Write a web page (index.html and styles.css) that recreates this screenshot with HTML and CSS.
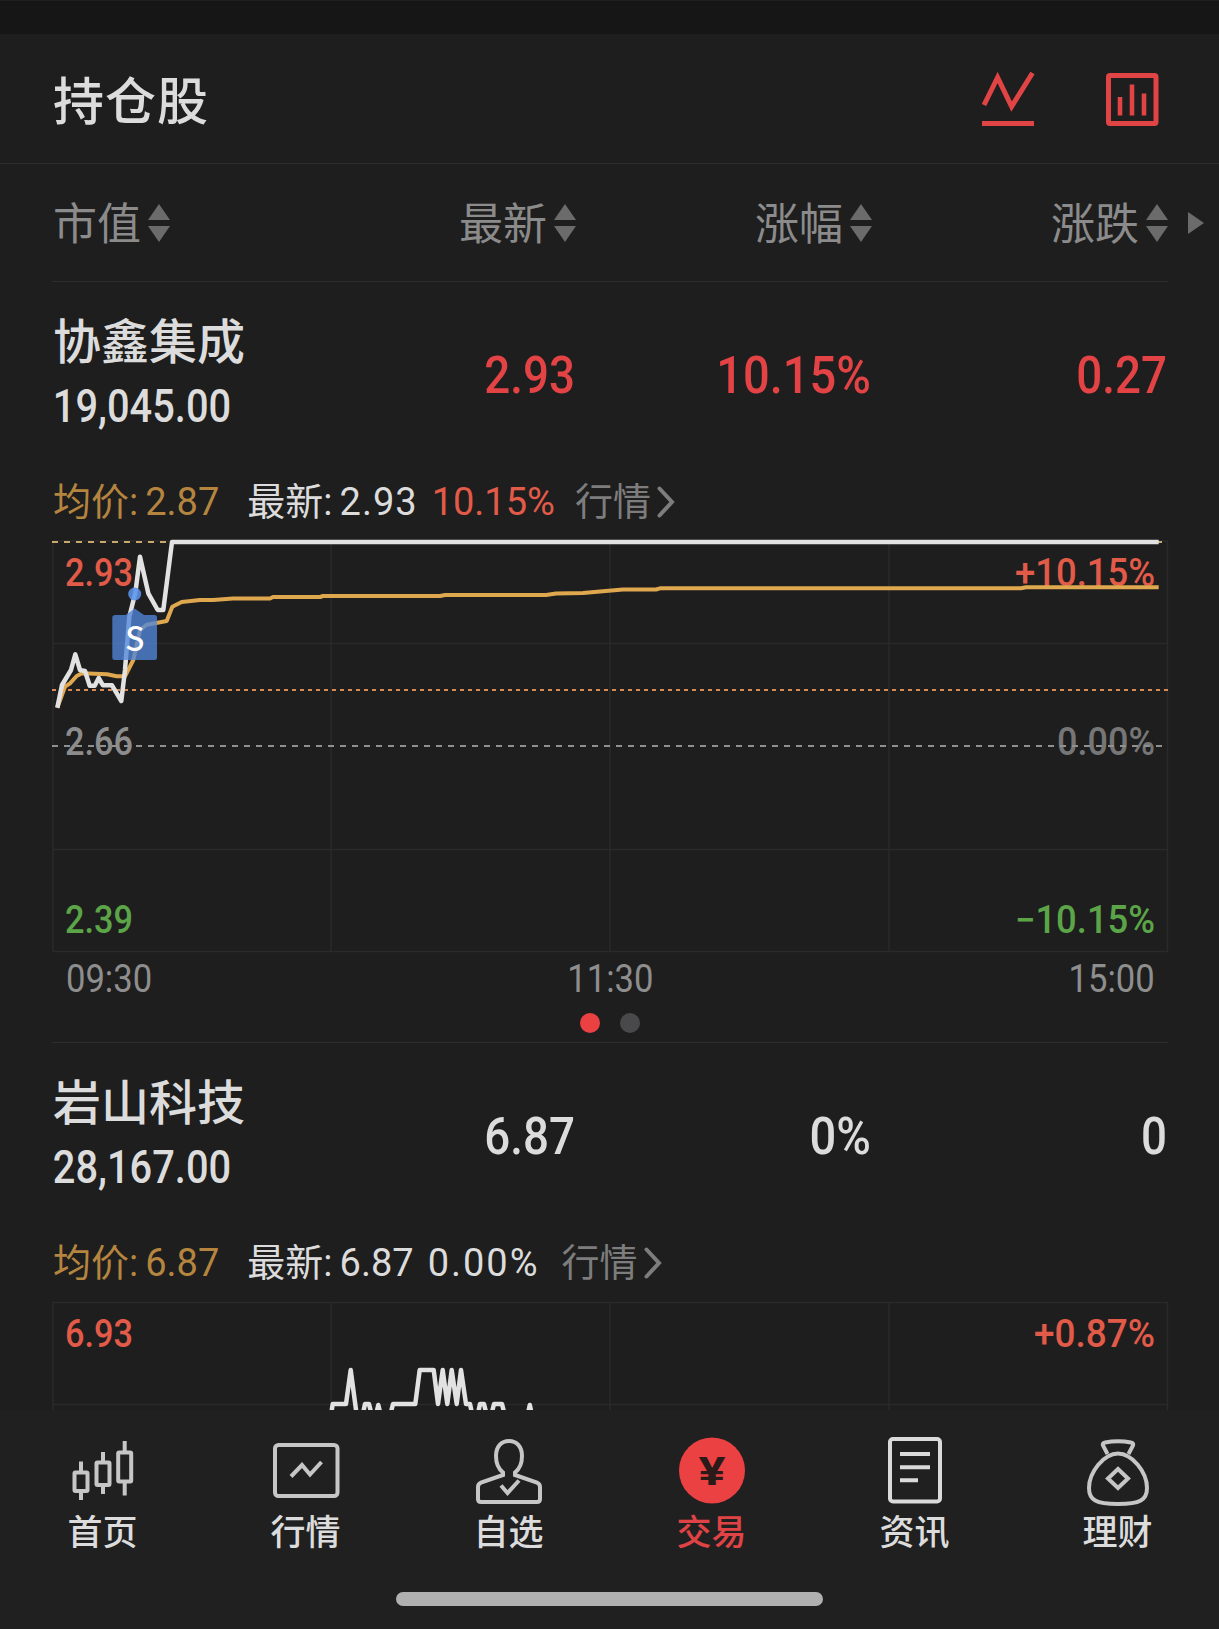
FILE: index.html
```html
<!DOCTYPE html>
<html lang="zh-CN">
<head>
    <meta charset="UTF-8">
    <meta name="viewport" content="width=device-width, initial-scale=1.0">
    <title>持仓股</title>
    <link rel="stylesheet" href="styles.css">
</head>
<body>
    <div class="strip"></div>
    <header class="header">
        <h1>持仓股</h1>
        <div class="headerIcons">
            <svg class="headerIcon" viewBox="0 0 54 56" fill="none" stroke="#e04445" stroke-width="5">
                <path d="M3 33L16.6 5.500L30.6 34.500L51.5 1"/>
                <path d="M1 51.500H53" stroke-width="5"/>
            </svg>
            <svg class="headerIcon" viewBox="0 0 54 56" fill="none" stroke="#e04445" stroke-width="5">
                <rect x="3.5" y="3.5" width="47.5" height="48" rx="1.5"/>
                <path d="M15 25V43.500M27 12.500V43.500M39 21.500V43.500" stroke-width="4.600"/>
            </svg>
        </div>
    </header>

    <div class="columns">
        <div class="column">市值<svg class="sort" viewBox="0 0 22 38"><path d="M11 0L22 16H0ZM0 22H22L11 38Z"/></svg></div>
        <div class="column">最新<svg class="sort" viewBox="0 0 22 38"><path d="M11 0L22 16H0ZM0 22H22L11 38Z"/></svg></div>
        <div class="column">涨幅<svg class="sort" viewBox="0 0 22 38"><path d="M11 0L22 16H0ZM0 22H22L11 38Z"/></svg></div>
        <div class="column">涨跌<svg class="sort" viewBox="0 0 22 38"><path d="M11 0L22 16H0ZM0 22H22L11 38Z"/></svg></div>
        <svg class="more" viewBox="0 0 16 22"><path d="M0 0L16 11L0 22Z"/></svg>
    </div>

    <main class="list">
        <section class="holding">
            <div class="quote">
                <div class="stock">
                    <div class="name">协鑫集成</div>
                    <div class="amount">19,045.00</div>
                </div>
                <div class="value red">2.93</div>
                <div class="value rate red">10.15%</div>
                <div class="value red">0.27</div>
            </div>
            <div class="info">
                <span class="average">均价:<b>2.87</b></span>
                <span class="latest wide">最新:<b>2.93</b></span>
                <span class="percent up">10.15%</span>
                <span class="link">行情</span>
                <svg class="chevron" viewBox="0 0 18 32"><path d="M2.500 2.500L15 16L2.500 29.500"/></svg>
            </div>
            <svg class="chart" viewBox="52 540 1117 412">
                <path class="grid" d="M53 541H1167.500V951.500H53ZM331 541V951M610 541V951M889 541V951M53 643.500H1167M53 849.500H1167"/>
                <text class="label up" x="65" y="586" textLength="68" lengthAdjust="spacingAndGlyphs">2.93</text>
                <text class="label up" x="1015" y="586" textLength="140" lengthAdjust="spacingAndGlyphs">+10.15%</text>
                <text class="label flat" x="65" y="755" textLength="68" lengthAdjust="spacingAndGlyphs">2.66</text>
                <text class="label flat dim" x="1057" y="755" textLength="98" lengthAdjust="spacingAndGlyphs">0.00%</text>
                <text class="label down" x="65" y="933" textLength="68" lengthAdjust="spacingAndGlyphs">2.39</text>
                <text class="label down" x="1015" y="933" textLength="140" lengthAdjust="spacingAndGlyphs">−10.15%</text>
                <path d="M52 542H1162" stroke="#c9a86c" stroke-width="2" stroke-dasharray="6 6"/>
                <path d="M52 690H1168" stroke="#d58a55" stroke-width="2" stroke-dasharray="4 4"/>
                <path d="M52 746H1162" stroke="#909090" stroke-width="2" stroke-dasharray="6 6"/>
                <path class="line gold" d="M57.300 707.700L65 686.700L70 683.300L76.700 676L82 673.300L107 674.300L116.700 676.300H125L133.300 660L140 630L146.700 624.700L166.700 621L172.300 606.700L181.700 602L200 600H213L233 598.500H270L273 597H320L323 596H440L445 595H546L556 593.500L583 593L623 589.500H656L660 588.300H1021L1026 587.300H1158.700"/>
                <path class="line" d="M57.300 707.700L62 685L71 670L75.300 654.300L80 670L85 671L89.700 685.700H94.700L98.700 678L103 685.300H112L121.300 701L125 670L129.300 616.700L135.300 593L140 556.700L148.300 593.300L157.700 610H163.300L172 542H1158.700"/>
                <circle cx="134.700" cy="594" r="6.500" fill="#5a93ec" fill-opacity=".88"/>
                <path d="M115 615H125.500L134.700 608.500L144 615H154.500Q157 615 157 617.500V657.500Q157 660 154.500 660H115Q112.300 660 112.300 657.500V617.500Q112.300 615 115 615Z" fill="#5187da" fill-opacity=".78"/>
                <text class="sell" x="135" y="650.500">S</text>
            </svg>
            <div class="times">
                <span>09:30</span>
                <span>11:30</span>
                <span>15:00</span>
            </div>
            <div class="dots">
                <i class="dot active"></i>
                <i class="dot"></i>
            </div>
        </section>

        <section class="holding">
            <div class="quote">
                <div class="stock">
                    <div class="name">岩山科技</div>
                    <div class="amount">28,167.00</div>
                </div>
                <div class="value">6.87</div>
                <div class="value rate">0%</div>
                <div class="value">0</div>
            </div>
            <div class="info">
                <span class="average">均价:<b>6.87</b></span>
                <span class="latest">最新:<b>6.87</b></span>
                <span class="percent">0.00%</span>
                <span class="link">行情</span>
                <svg class="chevron" viewBox="0 0 18 32"><path d="M2.500 2.500L15 16L2.500 29.500"/></svg>
            </div>
            <svg class="chart" viewBox="52 1301 1117 412">
                <path class="grid" d="M53 1302.500H1167.500V1712H53ZM331 1302.500V1712M610 1302.500V1712M889 1302.500V1712M53 1404.500H1167"/>
                <text class="label up" x="65" y="1347" textLength="68" lengthAdjust="spacingAndGlyphs">6.93</text>
                <text class="label up" x="1034" y="1347" textLength="121" lengthAdjust="spacingAndGlyphs">+0.87%</text>
                <path class="line" d="M331.500 1412L332.700 1404H346L350.700 1370L356.300 1412M363.300 1412L365 1404H369L371 1412M376.700 1412L378.300 1405L380 1412M391 1412L393 1404H415.300L419.700 1370H433.700L438 1404L442.700 1370L447.300 1404L451.700 1370L456.700 1404L461 1370L466 1404H470L471.700 1412M478.300 1412L480 1404H484L486 1412M492 1412L494 1404H502L504 1412M528.300 1412L529.800 1405L531.300 1412"/>
            </svg>
        </section>
    </main>

    <nav class="nav">
        <div class="tabs">
            <div class="tab">
                <svg class="icon" viewBox="0 0 72 72">
                    <path d="M14 25.500V36M14 56V64M36 16V26M36 50V58M57.700 5V16M57.700 46V59.500"/>
                    <rect x="7.500" y="36.500" width="13" height="18.500" rx="1"/>
                    <rect x="29.500" y="26.500" width="13" height="22.500" rx="1"/>
                    <rect x="51.200" y="16.500" width="13" height="29" rx="1"/>
                </svg>
                <span>首页</span>
            </div>
            <div class="tab">
                <svg class="icon" viewBox="0 0 72 72">
                    <rect x="5" y="9" width="62.500" height="51" rx="3.500"/>
                    <path d="M21 40.500L32 29L40 38.500L51.500 26"/>
                </svg>
                <span>行情</span>
            </div>
            <div class="tab">
                <svg class="icon" viewBox="0 0 72 72">
                    <path d="M30 39V36.500C25 32.500 23 27.500 23 20C23 10.500 28.500 5 36 5S49 10.500 49 20C49 27.500 47 32.500 42 36.500V39L64 46.500Q67 48 67 51V63Q67 66 64 66H8Q5 66 5 63V51Q5 48 8 46.500Z"/>
                    <path d="M28 49.500L34.500 57L46 44.500"/>
                </svg>
                <span>自选</span>
            </div>
            <div class="tab current">
                <svg class="icon" viewBox="0 0 72 72">
                    <circle class="coin" cx="36" cy="34.500" r="33"/>
                    <text class="yen" x="22.500" y="48.500" textLength="27" lengthAdjust="spacingAndGlyphs">¥</text>
                </svg>
                <span>交易</span>
            </div>
            <div class="tab">
                <svg class="icon bright" viewBox="0 0 72 72">
                    <rect x="11" y="3" width="50" height="62.500" rx="3"/>
                    <path d="M21 18H51M21 31.300H51M21 44.300H39"/>
                </svg>
                <span>资讯</span>
            </div>
            <div class="tab">
                <svg class="icon" viewBox="0 0 72 72">
                    <path d="M25.500 18L21 9.500Q20 7 23 6.500Q36 4 49 6.500Q52 7 51 9.500L46.500 18"/>
                    <path d="M36 17.500C22 17.500 7 36 7 52C7 64 14 68 36 68S65 64 65 52C65 36 50 17.500 36 17.500Z"/>
                    <path d="M36 33L46 42.500L36 52L26 42.500Z"/>
                </svg>
                <span>理财</span>
            </div>
        </div>
        <div class="homeBar"></div>
    </nav>
</body>
</html>
```
FILE: styles.css
```css
* {
    box-sizing: border-box;
}
body {
    margin: 0;
    width: 1219px;
    height: 1629px;
    display: flex;
    flex-direction: column;
    overflow: hidden;
    background-color: #1e1e1e;
    color: #dcdcdc;
    font-family: "Roboto", "Noto Sans CJK SC", sans-serif;
}
.strip {
    height: 34px;
    flex: none;
    background-color: #161616;
    border-top: 1px solid #202020;
}
.header {
    height: 130px;
    flex: none;
    display: flex;
    justify-content: space-between;
    align-items: center;
    padding: 0 60px 0 53px;
    border-bottom: 1px solid #2d2d2d;
}
h1 {
    margin: 0;
    font-size: 51px;
    font-weight: 500;
    letter-spacing: 1px;
    line-height: 60px;
    padding-top: 8px;
}
.headerIcons {
    display: flex;
    gap: 70px;
}
.headerIcon {
    width: 54px;
    height: 56px;
    margin-top: 2px;
}
.columns {
    height: 117px;
    flex: none;
    display: grid;
    grid-template-columns: 280px 243px 296px 296px 36px;
    align-items: center;
    padding-left: 53px;
    color: #8b8b8b;
    font-size: 44px;
    padding-top: 5px;
}
.column {
    display: flex;
    align-items: center;
    justify-content: flex-end;
    gap: 7px;
    line-height: 60px;
}
.column:first-child {
    justify-content: flex-start;
}
.sort {
    width: 22px;
    height: 38px;
    fill: #6b6b6b;
    margin-top: -5px;
}
.more {
    width: 16px;
    height: 22px;
    fill: #6b6b6b;
    justify-self: end;
    margin-top: -5px;
}

.list {
    flex: 1;
    min-height: 0;
    overflow: hidden;
}
.holding {
    height: 761px;
    margin: 0 51px 0 52px;
    padding-top: 26px;
    border-top: 1px solid #2d2d2d;
}
.quote {
    height: 130px;
    display: grid;
    grid-template-columns: 280px 243px 296px 296px;
    align-items: center;
}
.name {
    font-size: 48px;
    font-weight: 500;
    line-height: 66px;
    padding-left: 1px;
    padding-top: 2px;
    height: 66px;
}
.amount {
    font-size: 46px;
    font-weight: 500;
    line-height: 64px;
    padding-left: 1px;
    transform: scaleX(.865);
    transform-origin: left;
}
.value {
    font-size: 52px;
    font-weight: 500;
    text-align: right;
    transform: scaleX(.88);
    transform-origin: right;
    padding-top: 4px;
}
.rate {
    transform: scaleX(.905);
}
.red {
    color: #e34345;
}
.info {
    height: 60px;
    margin-top: 34px;
    margin-bottom: 8px;
    display: flex;
    align-items: center;
    font-size: 38px;
    line-height: 60px;
    padding-left: 1px;
}
.info b {
    font-weight: 400;
    margin-left: 7px;
}
.wide b {
    letter-spacing: 1px;
}
.average {
    color: #b5853f;
    margin-right: 28px;
}
.percent {
    margin-left: 14px;
    margin-right: 22px;
    letter-spacing: 2px;
}
.percent.up {
    margin-right: 20px;
    letter-spacing: 0;
}
.link {
    color: #7d7d7d;
}
.chevron {
    width: 18px;
    height: 32px;
    margin-left: 6px;
    fill: none;
    stroke: #7d7d7d;
    stroke-width: 4;
    stroke-linecap: round;
}
.chart {
    display: block;
    width: 1117px;
    height: 412px;
    overflow: visible;
}
.grid {
    fill: none;
    stroke: #2a2a2a;
    stroke-width: 1.5;
}
.label {
    font-size: 38px;
    font-weight: 500;
}
.up {
    color: #e25b49;
    fill: #e25b49;
}
.down {
    fill: #5ba548;
}
.flat {
    fill: #8c8c8c;
}
.dim {
    fill: #767676;
}
.line {
    fill: none;
    stroke: #e2e2e2;
    stroke-width: 4.5;
    stroke-linejoin: round;
}
.gold {
    stroke: #dfa84f;
    stroke-width: 4;
}
.sell {
    font-family: "Lato", sans-serif;
    font-size: 35px;
    font-weight: 500;
    text-anchor: middle;
    fill: #fff;
}
.times {
    display: flex;
    justify-content: space-between;
    padding: 0 13px 0 14px;
    font-size: 38px;
    line-height: 54px;
    color: #8e8e8e;
}
.times span {
    transform: scaleX(.91);
    transform-origin: left;
}
.times span:nth-child(2) {
    transform-origin: center;
}
.times span:last-child {
    transform-origin: right;
}
.dots {
    display: flex;
    justify-content: center;
    gap: 20px;
    margin-top: 7px;
}
.dot {
    width: 20px;
    height: 20px;
    border-radius: 50%;
    background-color: #49494b;
}
.active {
    background-color: #ec4142;
}

.nav {
    height: 219px;
    flex: none;
    background-color: #202020;
}
.tabs {
    display: flex;
    padding: 26px 0 0 1px;
}
.tab {
    flex: 1;
    display: flex;
    flex-direction: column;
    align-items: center;
    font-size: 35px;
    font-weight: 500;
    line-height: 50px;
    color: #dcdcdc;
}
.tab span {
    margin-top: 1px;
}
.icon {
    width: 72px;
    height: 72px;
    fill: none;
    stroke: #c6c6c6;
    stroke-width: 4;
}
.bright {
    stroke: #dadada;
}
.coin {
    fill: #ec4142;
    stroke: none;
}
.yen {
    font-size: 38px;
    font-weight: 700;
    fill: #2a1a1a;
    stroke: none;
}
.current {
    color: #e04345;
}
.homeBar {
    width: 427px;
    height: 14px;
    margin: 33px auto 0;
    border-radius: 7px;
    background-color: #b0b0b0;
}
```
